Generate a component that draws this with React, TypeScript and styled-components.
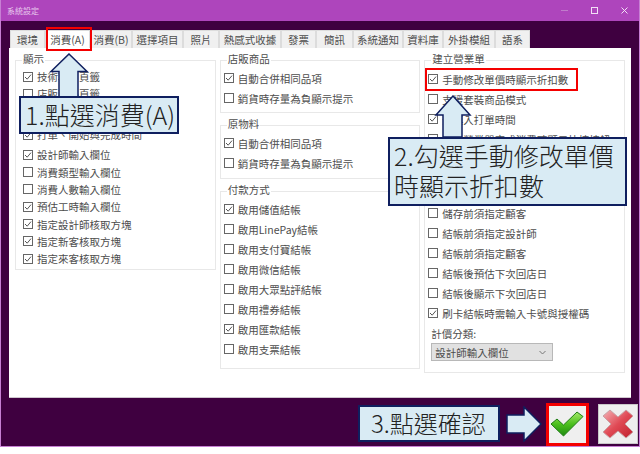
import React from "react";
import styled, { createGlobalStyle } from "styled-components";

const GlobalStyle = createGlobalStyle`
  html, body {
    margin: 0;
    padding: 0;
    background: #ffffff;
  }
  body {
    font-family: "Noto Sans CJK TC", "Noto Sans", sans-serif;
  }
`;

const Window = styled.div`
  position: relative;
  width: 640px;
  height: 447px;
  box-sizing: border-box;
  background: #3f0040;
  border: 1px solid #c77fd4;
  border-top: 0;
  overflow: hidden;
`;

const TitleBar = styled.div`
  height: 21px;
  background: #ae45bc;
  display: flex;
  align-items: center;
  justify-content: space-between;
  padding-left: 6px;
  color: #e6c8ec;
  font-size: 8px;
`;

const WindowButtons = styled.div`
  display: flex;
  align-items: center;
  gap: 23px;
  padding-right: 11px;
`;

const Body = styled.div`
  padding: 9px 8px 0 8px;
`;

const TabRow = styled.div`
  display: flex;
  height: 18px;
  padding-left: 1px;
`;

const Tab = styled.div<{ $width: number; $active?: boolean }>`
  width: ${(p) => p.$width}px;
  box-sizing: border-box;
  background: ${(p) => (p.$active ? "#ffffff" : "#f0f0f0")};
  border: 1px solid #dcdcdc;
  border-bottom: 0;
  color: #4d4d4d;
  font-size: 10.5px;
  line-height: 17px;
  text-align: center;
  white-space: nowrap;
`;

const Panel = styled.div`
  height: 350px;
  width: 622px;
  box-sizing: border-box;
  background: #ffffff;
  border-bottom: 1px solid #cfc8cf;
  padding: 12px 6px 0 6px;
  display: flex;
  gap: 4px;
`;

const Column = styled.div`
  width: 201px;
  display: flex;
  flex-direction: column;
  gap: 12px;
`;

const Group = styled.div<{ $height: number; $inset?: number; $top?: number }>`
  position: relative;
  height: ${(p) => p.$height}px;
  box-sizing: border-box;
  border: 1px solid #e8e8e8;
  padding-top: ${(p) => p.$top ?? 7}px;
  padding-left: ${(p) => p.$inset ?? 3}px;
  display: flex;
  flex-direction: column;
`;

const Legend = styled.div`
  position: absolute;
  left: 6px;
  top: -9px;
  background: #fff;
  padding: 0 1px;
  font-size: 10.5px;
  line-height: 14px;
  color: #4d4d4d;
`;

const Row = styled.div<{ $step: number; $extra?: number }>`
  height: ${(p) => p.$step}px;
  margin-top: ${(p) => p.$extra ?? 0}px;
  display: flex;
  align-items: center;
  gap: 4px;
  font-size: 10.5px;
  color: #4d4d4d;
  white-space: nowrap;
`;

const Box = styled.span`
  width: 8px;
  height: 8px;
  flex: none;
  border: 1px solid #666;
  background: #fff;
  display: flex;
  align-items: center;
  justify-content: center;
`;

const SelectLabel = styled.div`
  font-size: 10.5px;
  color: #4d4d4d;
  line-height: 14px;
  margin: 4px 0 2px 3px;
`;

const Select = styled.div`
  width: 122px;
  height: 18px;
  box-sizing: border-box;
  margin-left: 3px;
  padding: 0 6px 0 3px;
  background: #e1e1e1;
  border: 1px solid #b8b8b8;
  display: flex;
  align-items: center;
  justify-content: space-between;
  font-size: 10.5px;
  color: #4d4d4d;
`;

const RedFrame = styled.div<{ $x: number; $y: number; $w: number; $h: number; $weight?: number }>`
  position: absolute;
  left: ${(p) => p.$x}px;
  top: ${(p) => p.$y}px;
  width: ${(p) => p.$w}px;
  height: ${(p) => p.$h}px;
  box-sizing: border-box;
  border: ${(p) => p.$weight ?? 2}px solid #f40000;
`;

const Callout = styled.div<{ $x: number; $y: number; $w: number; $h: number; $size: number; $pad?: number }>`
  position: absolute;
  left: ${(p) => p.$x}px;
  top: ${(p) => p.$y}px;
  width: ${(p) => p.$w}px;
  height: ${(p) => p.$h}px;
  box-sizing: border-box;
  background: #d9ebf4;
  border: 2px solid #0f1f5f;
  color: #222;
  font-size: ${(p) => p.$size}px;
  font-weight: 300;
  line-height: 30px;
  padding: 1px 0 0 ${(p) => p.$pad ?? 4}px;
  white-space: nowrap;
`;

const Arrow = styled.svg<{ $x: number; $y: number }>`
  position: absolute;
  left: ${(p) => p.$x}px;
  top: ${(p) => p.$y}px;
`;

const ActionButton = styled.div<{ $x: number }>`
  position: absolute;
  left: ${(p) => p.$x}px;
  top: 404px;
  width: 40px;
  height: 40px;
  box-sizing: border-box;
  background: #efefef;
  border: 1px solid #c8c8c8;
  display: flex;
  align-items: center;
  justify-content: center;
`;

const tabs: [string, number][] = [
  ["環境", 35],
  ["消費(A)", 45],
  ["消費(B)", 42],
  ["選擇項目", 51],
  ["照片", 36],
  ["熱感式收據", 62],
  ["發票", 35],
  ["簡訊", 37],
  ["系統通知", 50],
  ["資料庫", 40],
  ["外掛模組", 52],
  ["語系", 35],
];

type Item = [string, boolean, number?];

const displayItems: Item[] = [
  ["技術項目頁籤", true],
  ["店販商品頁籤", false],
  ["消費單輸入欄位", true],
  ["打單、開始與完成時間", true, 6],
  ["設計師輸入欄位", true, 3],
  ["消費類型輸入欄位", false],
  ["消費人數輸入欄位", false],
  ["預估工時輸入欄位", true],
  ["指定設計師核取方塊", true],
  ["指定新客核取方塊", true],
  ["指定來客核取方塊", true],
];

const payItems: Item[] = [
  ["啟用儲值結帳", true],
  ["啟用LinePay結帳", false],
  ["啟用支付寶結帳", false],
  ["啟用微信結帳", false],
  ["啟用大眾點評結帳", false],
  ["啟用禮券結帳", false],
  ["啟用匯款結帳", true],
  ["啟用支票結帳", false],
];

const orderItems: Item[] = [
  ["手動修改單價時顯示折扣數", true],
  ["支援套裝商品模式", false],
  ["預填入打單時間", true],
  ["開啟營業單完成消費時顯示快捷按鈕", false],
  ["消費單新增時顯示設計師", false],
  ["儲存前須指定設計師", false, 14],
  ["儲存前須指定顧客", false],
  ["結帳前須指定設計師", false],
  ["結帳前須指定顧客", false],
  ["結帳後預估下次回店日", false],
  ["結帳後顯示下次回店日", false],
  ["刷卡結帳時需輸入卡號與授權碼", true],
];

const stockItems: Item[] = [
  ["自動合併相同品項", true],
  ["銷貨時存量為負顯示提示", false],
];

const Rows = ({ items, step }: { items: Item[]; step: number }) => (
  <>
    {items.map(([label, checked, extra]) => (
      <Row key={label} $step={step} $extra={extra}>
        <Box>
          {checked && (
            <svg width="8" height="8" viewBox="0 0 8 8">
              <path d="M1 4L3.2 6.2L7 1.6" fill="none" stroke="#555" strokeWidth="1" />
            </svg>
          )}
        </Box>
        {label}
      </Row>
    ))}
  </>
);

const App = () => (
  <Window>
    <GlobalStyle />
    <TitleBar>
      系統設定
      <WindowButtons>
        <svg width="7" height="7" viewBox="0 0 7 7">
          <path d="M0 3.5H7" stroke="#c07ccb" strokeWidth="1" />
        </svg>
        <svg width="7" height="7" viewBox="0 0 7 7">
          <rect x="0.5" y="0.5" width="6" height="6" fill="none" stroke="#f2dff5" strokeWidth="1" />
        </svg>
        <svg width="7" height="7" viewBox="0 0 7 7">
          <path d="M0.5 0.5L6.5 6.5M6.5 0.5L0.5 6.5" stroke="#f2dff5" strokeWidth="1" />
        </svg>
      </WindowButtons>
    </TitleBar>
    <Body>
      <TabRow>
        {tabs.map(([label, width], i) => (
          <Tab key={label} $width={width} $active={i === 1}>
            {label}
          </Tab>
        ))}
      </TabRow>
      <Panel>
        <Column>
          <Group $height={210} $inset={7}>
            <Legend>顯示</Legend>
            <Rows items={displayItems} step={17.3} />
          </Group>
        </Column>
        <Column>
          <Group $height={53}>
            <Legend>店販商品</Legend>
            <Rows items={stockItems} step={20} />
          </Group>
          <Group $height={54}>
            <Legend>原物料</Legend>
            <Rows items={stockItems} step={20} />
          </Group>
          <Group $height={178}>
            <Legend>付款方式</Legend>
            <Rows items={payItems} step={20} />
          </Group>
        </Column>
        <Column>
          <Group $height={313} $top={8}>
            <Legend>建立營業單</Legend>
            <Rows items={orderItems} step={20} />
            <SelectLabel>計價分類:</SelectLabel>
            <Select>
              設計師輸入欄位
              <svg width="7" height="5" viewBox="0 0 7 5">
                <path d="M0.5 1L3.5 4L6.5 1" fill="none" stroke="#777" strokeWidth="1" />
              </svg>
            </Select>
          </Group>
        </Column>
      </Panel>
    </Body>

    <RedFrame $x={45} $y={27} $w={46} $h={24} />
    <RedFrame $x={424} $y={68} $w={153} $h={23} />

    <Arrow $x={48} $y={53} width="40" height="45" viewBox="0 0 40 45">
      <path d="M20 1L38 18.5H29V44H10V18.5H2Z" fill="#d9ebf4" stroke="#0f1f5f" strokeWidth="1.5" />
    </Arrow>
    <Callout $x={18} $y={96} $w={160} $h={38} $size={25}>
      1.點選消費(A)
    </Callout>

    <Arrow $x={433} $y={95} width="38" height="43" viewBox="0 0 38 43">
      <path d="M19 1L36 20H28V42H9V20H2Z" fill="#d9ebf4" stroke="#0f1f5f" strokeWidth="1.5" />
    </Arrow>
    <Callout $x={387} $y={137} $w={239} $h={69} $size={25}>
      2.勾選手動修改單價
      <br />
      時顯示折扣數
    </Callout>

    <Callout $x={357} $y={405} $w={142} $h={37} $size={24} $pad={11}>
      3.點選確認
    </Callout>
    <Arrow $x={505} $y={406} width="36" height="36" viewBox="0 0 36 36">
      <path d="M1 9H18V1L35 18L18 35V27H1Z" fill="#d9ebf4" stroke="#0f1f5f" strokeWidth="1.5" />
    </Arrow>

    <ActionButton $x={546}>
      <svg width="34" height="26" viewBox="0 0 34 26">
        <defs>
          <linearGradient id="okFill" x1="0" y1="0" x2="0" y2="1">
            <stop offset="0" stopColor="#a6e86a" />
            <stop offset="0.5" stopColor="#4cc01e" />
            <stop offset="1" stopColor="#1f8a10" />
          </linearGradient>
        </defs>
        <path d="M1 13L7 8L13.5 14L27 1L33 5.5L13.5 25Z" fill="url(#okFill)" stroke="#1f7d14" strokeWidth="1" strokeLinejoin="round" />
      </svg>
    </ActionButton>
    <ActionButton $x={597}>
      <svg width="34" height="30" viewBox="0 0 34 30">
        <defs>
          <linearGradient id="noFill" x1="0" y1="0" x2="1" y2="1">
            <stop offset="0" stopColor="#f4b4b8" />
            <stop offset="0.5" stopColor="#e04a55" />
            <stop offset="1" stopColor="#c01f2c" />
          </linearGradient>
        </defs>
        <path d="M2 7L9 1L17 8L25 1L32 7L24 15L32 23L25 29L17 22L9 29L2 23L10 15Z" fill="url(#noFill)" stroke="#c9a0a4" strokeWidth="1" strokeLinejoin="round" />
      </svg>
    </ActionButton>
    <RedFrame $x={545} $y={403} $w={43} $h={43} $weight={3} />
  </Window>
);

export default App;
